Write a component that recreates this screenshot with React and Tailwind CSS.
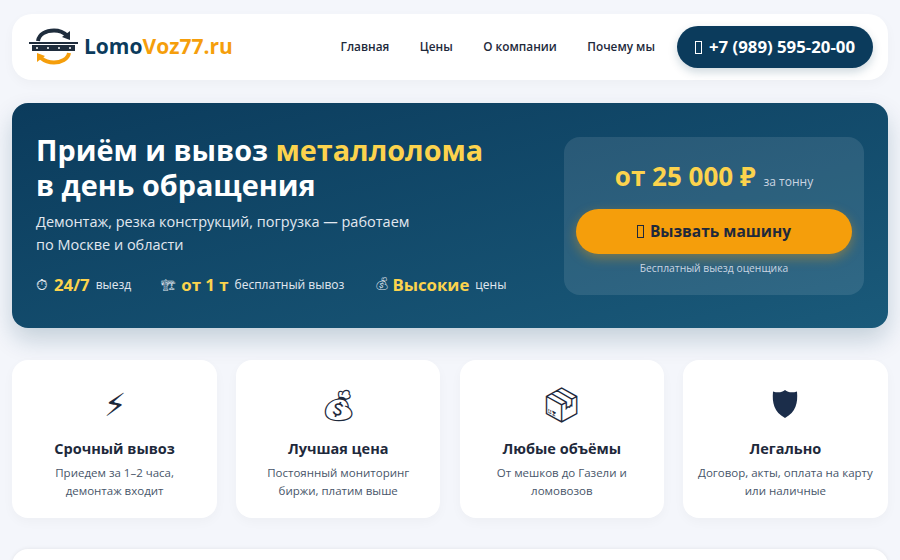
import React from 'react';

const NAV = ['Главная', 'Цены', 'О компании', 'Почему мы'];

const STATS = [
  { icon: '⏱\uFE0E', iconClass: 'w-[12px] text-[15px]', value: '24/7', label: 'выезд' },
  { icon: '🏗\uFE0E', iconClass: 'w-[14px] text-[11.5px]', value: 'от 1 т', label: 'бесплатный вывоз' },
  { icon: '💰\uFE0E', iconClass: 'w-[12px] text-[12.6px]', value: 'Высокие', label: 'цены' },
];

const FEATURES = [
  { icon: '⚡\uFE0E', iconClass: 'text-[32px]', title: 'Срочный вывоз', lines: ['Приедем за 1–2 часа,', 'демонтаж входит'] },
  { icon: '💰\uFE0E', iconClass: 'text-[31px]', title: 'Лучшая цена', lines: ['Постоянный мониторинг', 'биржи, платим выше'] },
  { icon: '📦\uFE0E', iconClass: 'text-[34px]', title: 'Любые объёмы', lines: ['От мешков до Газели и', 'ломовозов'] },
  { icon: null, title: 'Легально', lines: ['Договор, акты, оплата на карту', 'или наличные'] },
];

// missing-glyph box, the reference shows these instead of the phone and truck emoji
const Tofu = () => <span className="inline-block h-[13px] w-[7px] border border-current" />;

const Shield = () => (
  <svg width="26" height="48" viewBox="0 0 26 48">
    <path d="M13 10 C16 12.5 20 13 25 11.5 C26 23 24 32 13 38 C2 32 0 23 1 11.5 C6 13 10 12.5 13 10 Z" fill="#1b2d4a" />
  </svg>
);

const Logo = () => (
  <svg width="49" height="40" viewBox="0 0 49 40" className="shrink-0">
    <path d="M9 14 C10 7 17 3.5 25 3.5 C31 3.5 35 5.5 38 8.5" fill="none" stroke="#1f2d3d" strokeWidth="4" />
    <path d="M33 10 L41 4 L41 13 Z" fill="#1f2d3d" />
    <rect x="0" y="15" width="49" height="2" fill="#1f2d3d" />
    <rect x="3" y="18" width="43" height="6" fill="#1f2d3d" />
    <circle cx="8" cy="21" r="1" fill="#fff" />
    <circle cx="19" cy="21" r="1" fill="#fff" />
    <circle cx="30" cy="21" r="1" fill="#fff" />
    <circle cx="41" cy="21" r="1" fill="#fff" />
    <path d="M40 26 C39 32 32 35.5 25 35.5 C19 35.5 15 33.5 12 31" fill="none" stroke="#f59e0b" strokeWidth="4" />
    <path d="M16 29 L8 35 L8 26 Z" fill="#f59e0b" />
  </svg>
);

export default function App() {
  return (
    <div className="h-[560px] overflow-hidden bg-[#f4f6fb] px-3 pt-[14px] font-['Open_Sans','Noto_Sans',sans-serif] text-[#1e293b]">
      <header className="flex h-[66px] items-center justify-between rounded-[20px] bg-white pl-[17px] pr-[15px] shadow-[0_4px_12px_rgba(0,0,0,0.03)]">
        <div className="flex items-center gap-[6px]">
          <Logo />
          <span className="text-[21px] font-bold text-[#0b3b5c]">
            Lomo<span className="text-[#f59e0b]">Voz77.ru</span>
          </span>
        </div>
        <div className="flex items-center gap-[22px]">
          <nav className="flex items-center gap-[30.5px]">
            {NAV.map((item) => (
              <a key={item} className="text-[11.8px] font-semibold text-[#1e293b]">{item}</a>
            ))}
          </nav>
          <a className="flex h-[42px] items-center gap-[7px] rounded-full bg-[#0b3b5c] px-[18px] text-[16.8px] font-bold text-white shadow-[0_4px_10px_rgba(11,59,92,0.2)]">
            <Tofu /> +7 (989) 595-20-00
          </a>
        </div>
      </header>

      <section className="mt-[23px] flex h-[225px] justify-between rounded-[16px] bg-gradient-to-br from-[#0b3b5c] to-[#1a5a7a] pl-[24px] pr-6 pt-[29px] shadow-[0_12px_24px_rgba(11,59,92,0.2)]">
        <div>
          <h1 className="text-[28.8px] font-bold leading-[35px] text-white">
            Приём и вывоз <span className="text-[#fcd34d]">металлолома</span>
            <br />в день обращения
          </h1>
          <p className="mt-2 text-[14.5px] leading-[23px] text-[#e2e8f0]">
            Демонтаж, резка конструкций, погрузка — работаем
            <br />по Москве и области
          </p>
          <div className="mt-[17px] flex h-[23px] items-center gap-[30px]">
            {STATS.map((stat) => (
              <div key={stat.value} className="flex items-center gap-[6px]">
                <span className={`whitespace-nowrap text-[#e2e8f0] ${stat.iconClass}`}>{stat.icon}</span>
                <span className="text-[16.8px] font-bold text-[#fcd34d]">{stat.value}</span>
                <span className="text-[12px] text-[#e2e8f0]">{stat.label}</span>
              </div>
            ))}
          </div>
        </div>
        <div className="mt-[5px] flex h-[158px] w-[300px] flex-col items-center rounded-[16px] bg-white/10 px-3 pt-[20px]">
          <div className="flex items-baseline gap-2">
            <span className="text-[26px] font-bold text-[#fcd34d]">от 25 000 ₽</span>
            <span className="text-[12px] text-[#cbd5e1]">за тонну</span>
          </div>
          <a className="mt-[13px] flex h-[45px] w-full items-center justify-center gap-[6px] rounded-full bg-[#f59e0b] text-[15.5px] font-bold text-[#1e293b] shadow-[0_4px_12px_rgba(245,158,11,0.4)]">
            <Tofu /> Вызвать машину
          </a>
          <p className="mt-[7px] text-[10.3px] text-[#cbd5e1]">Бесплатный выезд оценщика</p>
        </div>
      </section>

      <div className="mx-[0.4px] mt-8 grid grid-cols-4 gap-[19.2px]">
        {FEATURES.map((feature) => (
          <div key={feature.title} className="flex h-[158px] flex-col items-center rounded-[16px] bg-white pt-[20px] text-center shadow-[0_4px_12px_rgba(0,0,0,0.03)]">
            {feature.icon ? (
              <span className={`h-[48px] leading-[48px] ${feature.iconClass}`}>{feature.icon}</span>
            ) : (
              <Shield />
            )}
            <h3 className="mt-[10px] text-[14.5px] font-bold">{feature.title}</h3>
            <p className="mt-[4px] text-[11.5px] leading-[18px] text-[#475569]">
              {feature.lines[0]}
              <br />
              {feature.lines[1]}
            </p>
          </div>
        ))}
      </div>

      <div className="mt-[31px] h-[40px] rounded-[16px] bg-white shadow-[0_0_4px_rgba(0,0,0,0.08)]" />
    </div>
  );
}
